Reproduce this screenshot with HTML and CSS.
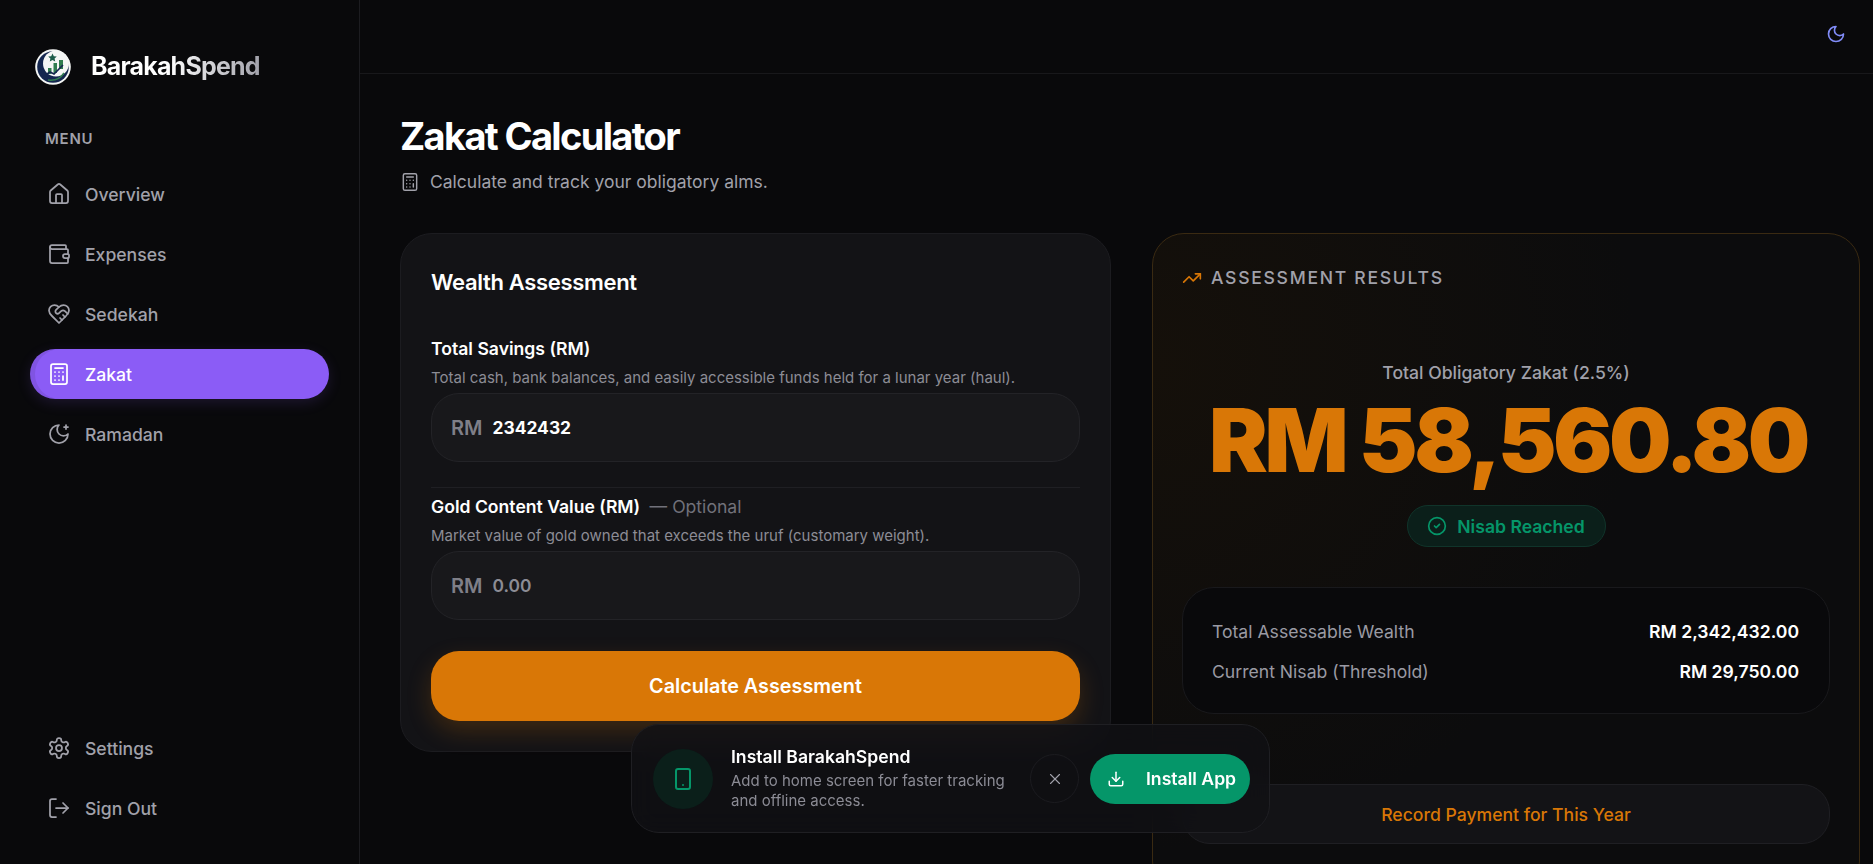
FILE: index.html
```html
<!DOCTYPE html>
<html lang="en">
<head>
    <meta charset="UTF-8">
    <meta name="viewport" content="width=device-width, initial-scale=1.0">
    <title>Zakat Calculator - BarakahSpend</title>
    <link rel="stylesheet" href="styles.css">
</head>
<body>
<div class="app">
    <aside class="sidebar">
        <div class="brand">
            <svg class="brand-logo" viewBox="0 0 36 36">
                <circle cx="18" cy="18" r="17.800" fill="#f4f6f5"/>
                <circle cx="18" cy="18" r="15.800" fill="#14264f"/>
                <circle cx="21" cy="14.500" r="13" fill="#f4f6f5"/>
                <path d="M17.500 4.500l1.300 2.700 3 .3-2.200 2 .6 3-2.700-1.500-2.700 1.500.6-3-2.200-2 3-.3z" fill="#1d5c4a"/>
                <path d="M13 19h3.500v6H13zM18.500 14h3.500v10h-3.500zM24 11h4v9h-4z" fill="#2f7d4f"/>
                <path d="M9 27l6-4 4 2 9-9" fill="none" stroke="#14264f" stroke-width="1.600"/>
                <path d="M13 31c6 1 12-1 16-7" fill="none" stroke="#2f7d4f" stroke-width="1.400"/>
            </svg>
            <span class="brand-name">BarakahSpend</span>
        </div>
        <div class="menu-label">MENU</div>
        <nav class="nav">
            <a class="nav-item">
                <svg class="icon" viewBox="0 0 24 24"><path d="M15 21v-8a1 1 0 0 0-1-1h-4a1 1 0 0 0-1 1v8"/><path d="M3 10a2 2 0 0 1 .709-1.528l7-5.999a2 2 0 0 1 2.582 0l7 5.999A2 2 0 0 1 21 10v9a2 2 0 0 1-2 2H5a2 2 0 0 1-2-2z"/></svg>
                Overview
            </a>
            <a class="nav-item">
                <svg class="icon" viewBox="0 0 24 24"><path d="M19 7V4a1 1 0 0 0-1-1H5a2 2 0 0 0 0 4h15a1 1 0 0 1 1 1v4h-3a2 2 0 0 0 0 4h3a1 1 0 0 0 1-1v-2a1 1 0 0 0-1-1"/><path d="M3 5v14a2 2 0 0 0 2 2h15a1 1 0 0 0 1-1v-4"/></svg>
                Expenses
            </a>
            <a class="nav-item">
                <svg class="icon" viewBox="0 0 24 24"><path d="M19 14c1.490-1.460 3-3.210 3-5.500A5.500 5.500 0 0 0 16.500 3c-1.760 0-3 .5-4.500 2-1.500-1.500-2.740-2-4.500-2A5.500 5.500 0 0 0 2 8.500c0 2.300 1.500 4.050 3 5.500l7 7Z"/><path d="M12 5 9.040 7.960a2.170 2.170 0 0 0 0 3.080c.82.82 2.130.85 3 .07l2.070-1.900a2.820 2.820 0 0 1 3.790 0l2.960 2.660"/><path d="m18 15-2-2"/><path d="m15 18-2-2"/></svg>
                Sedekah
            </a>
            <a class="nav-item active">
                <svg class="icon" viewBox="0 0 24 24"><rect width="16" height="20" x="4" y="2" rx="2"/><line x1="8" x2="16" y1="6" y2="6"/><line x1="16" x2="16" y1="14" y2="18"/><path d="M16 10h.01M12 10h.01M8 10h.01M12 14h.01M8 14h.01M12 18h.01M8 18h.01"/></svg>
                Zakat
            </a>
            <a class="nav-item">
                <svg class="icon" viewBox="0 0 24 24"><path d="M12 3a6 6 0 0 0 9 9 9 9 0 1 1-9-9Z"/><path d="M19 3v4"/><path d="M21 5h-4"/></svg>
                Ramadan
            </a>
        </nav>
        <nav class="nav nav-bottom">
            <a class="nav-item">
                <svg class="icon" viewBox="0 0 24 24"><path d="M12.220 2h-.44a2 2 0 0 0-2 2v.18a2 2 0 0 1-1 1.730l-.43.25a2 2 0 0 1-2 0l-.15-.08a2 2 0 0 0-2.730.73l-.22.38a2 2 0 0 0 .73 2.730l.15.1a2 2 0 0 1 1 1.720v.51a2 2 0 0 1-1 1.740l-.15.09a2 2 0 0 0-.73 2.730l.22.38a2 2 0 0 0 2.730.73l.15-.08a2 2 0 0 1 2 0l.43.25a2 2 0 0 1 1 1.730V20a2 2 0 0 0 2 2h.44a2 2 0 0 0 2-2v-.18a2 2 0 0 1 1-1.730l.43-.25a2 2 0 0 1 2 0l.15.08a2 2 0 0 0 2.730-.73l.22-.39a2 2 0 0 0-.73-2.730l-.15-.08a2 2 0 0 1-1-1.740v-.5a2 2 0 0 1 1-1.740l.15-.09a2 2 0 0 0 .73-2.730l-.22-.38a2 2 0 0 0-2.730-.73l-.15.08a2 2 0 0 1-2 0l-.43-.25a2 2 0 0 1-1-1.730V4a2 2 0 0 0-2-2z"/><circle cx="12" cy="12" r="3"/></svg>
                Settings
            </a>
            <a class="nav-item">
                <svg class="icon" viewBox="0 0 24 24"><path d="M9 21H5a2 2 0 0 1-2-2V5a2 2 0 0 1 2-2h4"/><polyline points="16 17 21 12 16 7"/><line x1="21" x2="9" y1="12" y2="12"/></svg>
                Sign Out
            </a>
        </nav>
    </aside>

    <div class="main">
        <header class="topbar">
            <svg class="icon theme-icon" viewBox="0 0 24 24"><path d="M12 3a6 6 0 0 0 9 9 9 9 0 1 1-9-9Z"/></svg>
        </header>

        <div class="content">
            <h1>Zakat Calculator</h1>
            <p class="subtitle">
                <svg class="icon" viewBox="0 0 24 24"><rect width="16" height="20" x="4" y="2" rx="2"/><line x1="8" x2="16" y1="6" y2="6"/><line x1="16" x2="16" y1="14" y2="18"/><path d="M16 10h.01M12 10h.01M8 10h.01M12 14h.01M8 14h.01M12 18h.01M8 18h.01"/></svg>
                Calculate and track your obligatory alms.
            </p>

            <div class="columns">
                <section class="card form-card">
                    <h2>Wealth Assessment</h2>

                    <div class="field">
                        <div class="field-label">Total Savings (RM)</div>
                        <div class="field-help">Total cash, bank balances, and easily accessible funds held for a lunar year (haul).</div>
                        <div class="money-input"><span class="prefix">RM</span><span class="value">2342432</span></div>
                    </div>

                    <div class="field field-split">
                        <div class="field-label">Gold Content Value (RM) <span class="optional">&mdash; Optional</span></div>
                        <div class="field-help">Market value of gold owned that exceeds the uruf (customary weight).</div>
                        <div class="money-input"><span class="prefix">RM</span><span class="value empty">0.00</span></div>
                    </div>

                    <button class="calc-btn">Calculate Assessment</button>
                </section>

                <section class="card results-card">
                    <div class="results-head">
                        <svg class="icon" viewBox="0 0 24 24"><polyline points="22 7 13.500 15.500 8.500 10.500 2 17"/><polyline points="16 7 22 7 22 13"/></svg>
                        ASSESSMENT RESULTS
                    </div>
                    <div class="total-label">Total Obligatory Zakat (2.5%)</div>
                    <div class="total-value">RM 58,560.80</div>
                    <div class="badge">
                        <svg class="icon" viewBox="0 0 24 24"><circle cx="12" cy="12" r="10"/><path d="m9 12 2 2 4-4"/></svg>
                        Nisab Reached
                    </div>
                    <div class="summary">
                        <div class="summary-row"><span>Total Assessable Wealth</span><strong>RM 2,342,432.00</strong></div>
                        <div class="summary-row"><span>Current Nisab (Threshold)</span><strong>RM 29,750.00</strong></div>
                    </div>
                    <button class="record-btn">Record Payment for This Year</button>
                </section>
            </div>
        </div>
    </div>

    <div class="install-popup">
        <div class="install-icon">
            <svg class="icon" viewBox="0 0 24 24"><rect width="14" height="20" x="5" y="2" rx="2"/><path d="M12 18h.01"/></svg>
        </div>
        <div class="install-text">
            <div class="install-title">Install BarakahSpend</div>
            <div class="install-sub">Add to home screen for faster tracking and offline access.</div>
        </div>
        <button class="install-close">
            <svg class="icon" viewBox="0 0 24 24"><path d="M18 6 6 18"/><path d="m6 6 12 12"/></svg>
        </button>
        <button class="install-btn">
            <svg class="icon" viewBox="0 0 24 24"><path d="M21 15v4a2 2 0 0 1-2 2H5a2 2 0 0 1-2-2v-4"/><polyline points="7 10 12 15 17 10"/><line x1="12" x2="12" y1="15" y2="3"/></svg>
            Install App
        </button>
    </div>
</div>
</body>
</html>
```

FILE: styles.css
```css
* {
    box-sizing: border-box;
}
html, body {
    height: 100%;
    margin: 0;
    overflow: hidden;
}
body {
    font-family: Inter, "Liberation Sans", sans-serif;
    background-color: #09090b;
    color: #fff;
}
button {
    font-family: inherit;
    border: 0;
}
.icon {
    fill: none;
    stroke: currentColor;
    stroke-width: 2;
    stroke-linecap: round;
    stroke-linejoin: round;
    flex-shrink: 0;
}
.app {
    display: flex;
    height: 864px;
    overflow: hidden;
}

/* sidebar */
.sidebar {
    width: 360px;
    flex-shrink: 0;
    display: flex;
    flex-direction: column;
    padding: 49px 30px 31px;
    border-right: 1px solid #1c1c20;
}
.brand {
    display: flex;
    align-items: center;
    gap: 20px;
    padding-left: 5px;
}
.brand-logo {
    width: 36px;
    height: 36px;
}
.brand-name {
    margin-bottom: 2px;
    font-size: 25px;
    font-weight: 700;
    letter-spacing: -0.8px;
    background: linear-gradient(90deg, #fff 45%, #a1a1aa);
    -webkit-background-clip: text;
    background-clip: text;
    color: transparent;
}
.menu-label {
    margin-top: 45px;
    padding-left: 15px;
    font-size: 15px;
    line-height: 18px;
    font-weight: 600;
    letter-spacing: 0.75px;
    color: #a1a1aa;
}
.nav {
    margin-top: 21px;
    display: flex;
    flex-direction: column;
    gap: 10px;
}
.nav-bottom {
    margin-top: auto;
}
.nav-item {
    display: flex;
    align-items: center;
    gap: 14px;
    height: 50px;
    padding: 0 17px;
    border-radius: 25px;
    font-size: 17.6px;
    font-weight: 500;
    color: #a1a1aa;
}
.nav-item .icon {
    width: 24px;
    height: 24px;
    stroke-width: 1.75;
}
.nav-item.active {
    background-color: #8b5cf6;
    color: #fff;
    box-shadow: inset 5px 0 0 rgba(0, 0, 0, 0.08), 0 4px 14px rgba(139, 92, 246, 0.15);
}

/* main */
.main {
    flex: 1;
    min-width: 0;
}
.topbar {
    height: 74px;
    display: flex;
    align-items: center;
    justify-content: flex-end;
    padding-right: 27px;
    border-bottom: 1px solid #18181b;
}
.theme-icon {
    width: 20px;
    height: 20px;
    color: #818cf8;
    margin-bottom: 5px;
}
.content {
    padding: 40px 13px 0 40px;
}
h1 {
    margin: 0;
    font-size: 38px;
    line-height: 44px;
    font-weight: 700;
    letter-spacing: -1.65px;
}
.subtitle {
    display: flex;
    align-items: center;
    gap: 10px;
    margin: 12px 0 0;
    font-size: 17.5px;
    line-height: 24px;
    color: #a1a1aa;
}
.subtitle .icon {
    width: 20px;
    height: 20px;
    stroke-width: 1.75;
}
.columns {
    display: grid;
    grid-template-columns: 711px 1fr;
    gap: 41px;
    align-items: start;
    margin-top: 39px;
}
.card {
    border-radius: 32px;
}

/* form card */
.form-card {
    height: 519px;
    padding: 34px 30px 0;
    background-color: #131316;
    border: 1px solid #1c1c20;
}
h2 {
    margin: 0;
    font-size: 22px;
    line-height: 28px;
    font-weight: 600;
    letter-spacing: -0.33px;
}
.field {
    margin-top: 41px;
}
.field-split {
    margin-top: 25px;
    padding-top: 7px;
    border-top: 1px solid #1f1f23;
}
.field-label {
    font-size: 17.6px;
    line-height: 24px;
    font-weight: 600;
}
.optional {
    margin-left: 5px;
    font-weight: 400;
    color: #71717a;
}
.field-help {
    margin-top: 7px;
    font-size: 15px;
    line-height: 20px;
    color: #8c8c95;
}
.money-input {
    display: flex;
    align-items: center;
    gap: 10px;
    height: 69px;
    margin-top: 5px;
    padding: 0 19px;
    border-radius: 28px;
    background-color: #18181b;
    border: 1px solid #232327;
}
.prefix {
    font-size: 20px;
    font-weight: 600;
    color: #7f7f88;
}
.value {
    font-size: 17.4px;
    font-weight: 700;
}
.value.empty {
    font-weight: 600;
    color: #8c8c95;
}
.calc-btn {
    display: block;
    width: 100%;
    height: 70px;
    margin-top: 31px;
    border-radius: 28px;
    background-color: #d97706;
    color: #fff;
    font-size: 19.8px;
    font-weight: 600;
    box-shadow: 0 10px 24px rgba(217, 119, 6, 0.22);
}

/* results card */
.results-card {
    height: 660px;
    padding: 32px 29px;
    border: 1px solid #3a2a12;
    background: radial-gradient(circle at 0 20%, #15100a 0, #0c0c0d 55%);
}
.results-head {
    display: flex;
    align-items: center;
    gap: 9px;
    font-size: 17.6px;
    line-height: 24px;
    font-weight: 500;
    letter-spacing: 1.7px;
    color: #a1a1aa;
}
.results-head .icon {
    width: 20px;
    height: 20px;
    color: #d97706;
}
.total-label {
    margin-top: 71px;
    text-align: center;
    font-size: 17.6px;
    line-height: 24px;
    font-weight: 500;
    color: #a1a1aa;
}
.total-value {
    margin-top: 11px;
    padding-left: 4px;
    text-align: center;
    font-size: 88px;
    line-height: 88px;
    font-weight: 900;
    letter-spacing: -3.5px;
    color: #d97706;
}
.badge {
    display: flex;
    align-items: center;
    justify-content: center;
    gap: 10px;
    width: 199px;
    height: 42px;
    margin: 21px auto 0;
    border-radius: 21px;
    background-color: #0b1f1a;
    border: 1px solid #10342a;
    font-size: 17.6px;
    font-weight: 600;
    color: #059669;
}
.badge .icon {
    width: 20px;
    height: 20px;
}
.summary {
    height: 127px;
    margin-top: 40px;
    padding: 31px 30px 0 29px;
    border-radius: 32px;
    border: 1px solid #19191c;
    background-color: #09090b;
    display: flex;
    flex-direction: column;
    gap: 16px;
}
.summary-row {
    display: flex;
    justify-content: space-between;
    align-items: center;
    height: 24px;
    font-size: 17.6px;
    color: #9a9aa3;
}
.summary-row strong {
    font-weight: 600;
    color: #fff;
}
.record-btn {
    display: block;
    width: 100%;
    height: 60px;
    margin-top: 70px;
    border-radius: 28px;
    background-color: #131316;
    border: 1px solid #1f1f23;
    color: #d97706;
    font-size: 17.6px;
    font-weight: 500;
}

/* install popup sits over the page */
.install-popup {
    position: fixed;
    left: 631px;
    top: 724px;
    width: 639px;
    height: 109px;
    display: flex;
    align-items: center;
    padding: 0 19px 0 21px;
    border-radius: 28px;
    background-color: rgba(17, 17, 20, 0.78);
    backdrop-filter: blur(12px);
    border: 1px solid #1f1f23;
}
.install-icon {
    width: 60px;
    height: 60px;
    border-radius: 50%;
    background-color: #0b1f1a;
    display: flex;
    align-items: center;
    justify-content: center;
    color: #059669;
}
.install-icon .icon {
    width: 24px;
    height: 24px;
}
.install-text {
    flex: 1;
    margin-left: 18px;
    min-width: 0;
}
.install-title {
    font-size: 17.6px;
    line-height: 22px;
    font-weight: 600;
}
.install-sub {
    width: 285px;
    margin-top: 3px;
    font-size: 15px;
    line-height: 20px;
    color: #8c8c95;
}
.install-close {
    width: 49px;
    height: 49px;
    display: flex;
    align-items: center;
    justify-content: center;
    border-radius: 50%;
    background: transparent;
    border: 1px solid #1c1c20;
    color: #a1a1aa;
}
.install-close .icon {
    width: 18px;
    height: 18px;
    stroke-width: 1.5;
}
.install-btn {
    width: 160px;
    height: 50px;
    margin-left: 11px;
    display: flex;
    align-items: center;
    gap: 21px;
    padding: 0 0 0 17px;
    border-radius: 25px;
    background-color: #059669;
    color: #fff;
    font-size: 17.6px;
    font-weight: 600;
    white-space: nowrap;
}
.install-btn .icon {
    width: 18px;
    height: 18px;
}
```
